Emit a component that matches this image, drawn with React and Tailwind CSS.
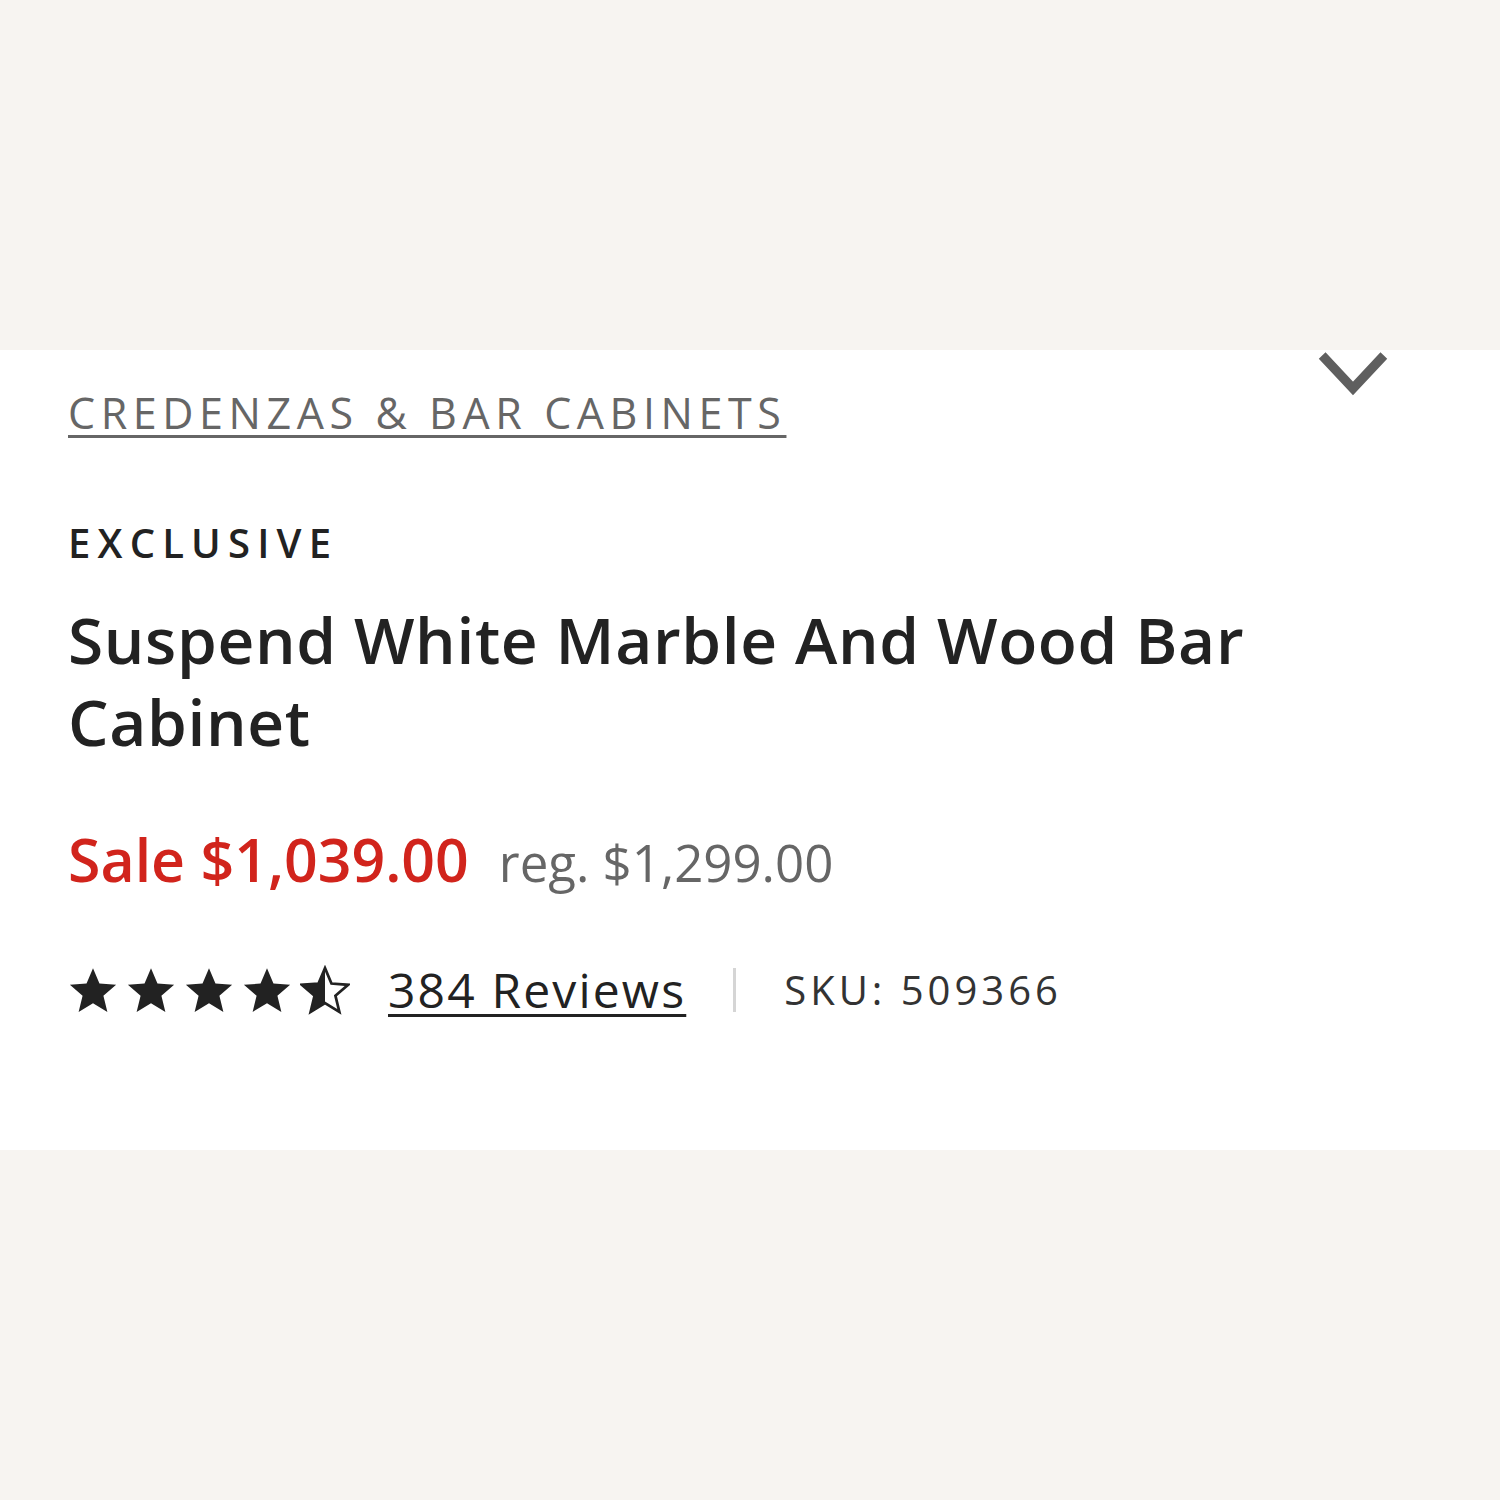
import React from 'react';

const STAR = 'M12 1.5l3.1 7.4 8 .6-6.1 5.2 1.9 7.8L12 18.3l-6.9 4.2 1.9-7.8L.9 9.5l8-.6z';

function Star({ half }) {
  return (
    <svg viewBox="0 0 24 24" className="w-[50px] h-[50px]">
      {half ? (
        <>
          <defs>
            <clipPath id="lefthalf">
              <rect x="0" y="0" width="12" height="24" />
            </clipPath>
          </defs>
          <path d={STAR} fill="none" stroke="#222" strokeWidth="1.3" />
          <path d={STAR} fill="#222" clipPath="url(#lefthalf)" />
        </>
      ) : (
        <path d={STAR} fill="#222" />
      )}
    </svg>
  );
}

export default function App() {
  return (
    <div className="min-h-[1500px] bg-[#f7f4f1] flex flex-col" style={{ fontFamily: '"Open Sans", "Noto Sans", sans-serif' }}>
      <div className="h-[350px]" />
      <div className="bg-white h-[800px] relative px-[68px]">
        {/* collapse chevron, cut off by the band above */}
        <svg viewBox="0 0 72 48" className="absolute left-[1316px] top-[-2px] w-[74px] h-[52px]">
          <path d="M6 6 L36 38 L66 6" fill="none" stroke="#5f5f5f" strokeWidth="9" />
        </svg>

        <div className="pt-[39px]">
          <a className="text-[43px] leading-[48px] tracking-[0.13em] text-[#666] underline decoration-[3px] underline-offset-[6px]">
            CREDENZAS &amp; BAR CABINETS
          </a>
        </div>

        <div className="mt-[84px] text-[40px] leading-[44px] font-semibold tracking-[0.18em] text-[#222]">
          EXCLUSIVE
        </div>

        <h1 className="mt-[34px] text-[64px] leading-[82px] font-semibold tracking-[0.01em] text-[#222] max-w-[1250px]">
          Suspend White Marble And Wood Bar Cabinet
        </h1>

        <div className="mt-[52px] flex items-baseline gap-[30px]">
          <span className="text-[59px] font-semibold text-[#d1241c]">Sale $1,039.00</span>
          <span className="text-[51px] text-[#666]">reg. $1,299.00</span>
        </div>

        <div className="mt-[50px] flex items-center">
          <div className="flex gap-[8px]">
            <Star />
            <Star />
            <Star />
            <Star />
            <Star half />
          </div>
          <a className="ml-[38px] text-[48px] tracking-[0.045em] text-[#222] underline decoration-[3px] underline-offset-[6px]">384 Reviews</a>
          <div className="ml-[47px] w-[3px] h-[44px] bg-[#d5d5d5]" />
          <span className="ml-[48px] text-[40px] tracking-[0.1em] text-[#333]">SKU: 509366</span>
        </div>
      </div>
    </div>
  );
}
